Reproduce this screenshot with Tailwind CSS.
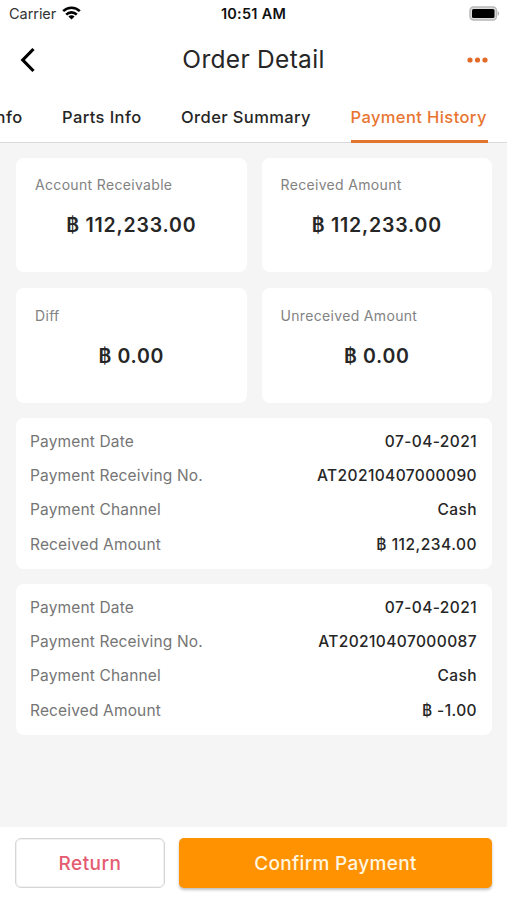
<!DOCTYPE html>
<html lang="en">
<head>
  <meta charset="UTF-8">
  <meta name="viewport" content="width=device-width, initial-scale=1.0">
  <title>Order Detail</title>
  <script src="https://cdn.jsdelivr.net/npm/@tailwindcss/browser@4"></script>
</head>
<body class="bg-[#f5f5f5] font-['Inter','Liberation_Sans',sans-serif] text-[#262626]">
  <div class="flex flex-col w-[507px] h-[900px] overflow-hidden">
    <header class="bg-white h-[143px] border-b border-[#dadada] shrink-0">
      <!-- Status bar -->
      <div class="grid grid-cols-3 items-center h-7 pl-[9px] pr-[7px]">
        <div class="flex items-center gap-[6px]">
          <span class="text-[14.5px] tracking-[-0.05px] text-[#333]">Carrier</span>
          <svg class="w-[19px] h-[14px] -mt-[2px]" viewBox="0 0 19 14" fill="none" stroke="#000" stroke-width="2.6">
            <path d="M1.2 5.2a11.8 11.8 0 0 1 16.6 0" />
            <path d="M4.2 8.6a7.5 7.5 0 0 1 10.6 0" />
            <path d="M9.5 13.6 6.4 10.5a4.4 4.4 0 0 1 6.2 0z" fill="#000" stroke="none" />
          </svg>
        </div>
        <span class="-ml-[2px] text-center text-[14.5px] font-semibold tracking-[0.25px] text-[#111]">10:51 AM</span>
        <svg class="justify-self-end w-[31px] h-[15px] -mt-[2px]" viewBox="0 0 31 15">
          <rect x="1" y="1" width="26.5" height="13" rx="3.5" fill="#ddd" stroke="#b8b8b8" stroke-width="1.4" />
          <rect x="3" y="3" width="22.5" height="9" rx="1.5" fill="#000" />
          <path d="M28.7 5.2v4.5c1.9-.7 1.9-3.8 0-4.5z" fill="#b0b0b0" />
        </svg>
      </div>

      <!-- Title bar -->
      <div class="grid grid-cols-[60px_1fr_60px] items-center h-16">
        <svg class="ml-[19px] w-[18px] h-[26px]" viewBox="0 0 18 26" fill="none" stroke="#000" stroke-width="3.2">
          <path d="M14.5 2 3.8 13l10.7 11" />
        </svg>
        <h1 class="pb-px text-center text-[24.5px] tracking-[0.3px]">Order Detail</h1>
        <svg class="ml-5 w-[22px] h-[6px]" viewBox="0 0 22 6" fill="#e26b28">
          <circle cx="3" cy="3" r="2.6" />
          <circle cx="10.5" cy="3" r="2.6" />
          <circle cx="18" cy="3" r="2.6" />
        </svg>
      </div>

      <!-- Tabs -->
      <nav class="flex justify-end gap-[39.5px] h-[51px] pr-[19px] text-[16.5px] font-medium tracking-[0.4px] whitespace-nowrap">
        <a class="pt-[13px]">Order Info</a>
        <a class="pt-[13px]">Parts Info</a>
        <a class="pt-[13px]">Order Summary</a>
        <a class="w-[137.5px] shrink-0 pt-[13px] text-[#e87530] border-b-[3px] border-[#e07530]">Payment History</a>
      </nav>
    </header>

    <main class="flex-1 pt-[15px] pl-4 pr-[15px]">
      <section class="grid grid-cols-2 gap-x-[15px] gap-y-4">
        <div class="bg-white rounded-lg h-[114px] px-[19px] pt-[17px]">
          <p class="text-[14px] leading-5 tracking-[0.33px] text-[#828282]">Account Receivable</p>
          <p class="mt-[15px] text-center text-[19.5px] leading-[30px] font-semibold tracking-[0.8px]">฿ 112,233.00</p>
        </div>
        <div class="bg-white rounded-lg h-[114px] px-[19px] pt-[17px]">
          <p class="text-[14px] leading-5 tracking-[0.33px] text-[#828282]">Received Amount</p>
          <p class="mt-[15px] text-center text-[19.5px] leading-[30px] font-semibold tracking-[0.8px]">฿ 112,233.00</p>
        </div>
        <div class="bg-white rounded-lg h-[115px] px-[19px] pt-[17px]">
          <p class="text-[14px] leading-[21px] tracking-[0.33px] text-[#828282]">Diff</p>
          <p class="mt-[15px] text-center text-[19.5px] leading-[30px] font-semibold tracking-[0.7px]">฿ 0.00</p>
        </div>
        <div class="bg-white rounded-lg h-[115px] px-[19px] pt-[17px]">
          <p class="text-[14px] leading-[21px] tracking-[0.33px] text-[#828282]">Unreceived Amount</p>
          <p class="mt-[15px] text-center text-[19.5px] leading-[30px] font-semibold tracking-[0.7px]">฿ 0.00</p>
        </div>
      </section>

      <dl class="mt-[15px] bg-white rounded-lg h-[151px] pl-[14px] pr-[15px] pt-[7px] text-[15.5px] leading-[34.2px] tracking-[0.4px]">
        <div class="flex justify-between"><dt class="text-[#757575] tracking-[0.15px]">Payment Date</dt><dd class="font-medium">07-04-2021</dd></div>
        <div class="flex justify-between"><dt class="text-[#757575] tracking-[0.15px]">Payment Receiving No.</dt><dd class="font-medium">AT20210407000090</dd></div>
        <div class="flex justify-between"><dt class="text-[#757575] tracking-[0.15px]">Payment Channel</dt><dd class="font-medium">Cash</dd></div>
        <div class="flex justify-between"><dt class="text-[#757575] tracking-[0.15px]">Received Amount</dt><dd class="font-medium tracking-[0.5px]">฿ 112,234.00</dd></div>
      </dl>

      <dl class="mt-[15px] bg-white rounded-lg h-[151px] pl-[14px] pr-[15px] pt-[7px] text-[15.5px] leading-[34.2px] tracking-[0.4px]">
        <div class="flex justify-between"><dt class="text-[#757575] tracking-[0.15px]">Payment Date</dt><dd class="font-medium">07-04-2021</dd></div>
        <div class="flex justify-between"><dt class="text-[#757575] tracking-[0.15px]">Payment Receiving No.</dt><dd class="font-medium">AT20210407000087</dd></div>
        <div class="flex justify-between"><dt class="text-[#757575] tracking-[0.15px]">Payment Channel</dt><dd class="font-medium">Cash</dd></div>
        <div class="flex justify-between"><dt class="text-[#757575] tracking-[0.15px]">Received Amount</dt><dd class="font-medium">฿ -1.00</dd></div>
      </dl>
    </main>

    <footer class="flex gap-[14px] h-[73px] bg-white pt-[11px] px-[15px] text-[19px] font-medium tracking-[0.5px] shrink-0">
      <button class="w-[150px] h-[50px] pt-[2px] rounded-md border border-[#d6d6d6] text-[#e55b70] shadow-[inset_0_0_0_1px_#f1f1f1]">Return</button>
      <button class="flex-1 h-[50px] pt-[2px] rounded-[5px] bg-[#ff9200] text-[#fff6e2] tracking-[0.3px] shadow-[0_2px_3px_rgba(0,0,0,0.25)]">Confirm Payment</button>
    </footer>
  </div>
</body>
</html>
